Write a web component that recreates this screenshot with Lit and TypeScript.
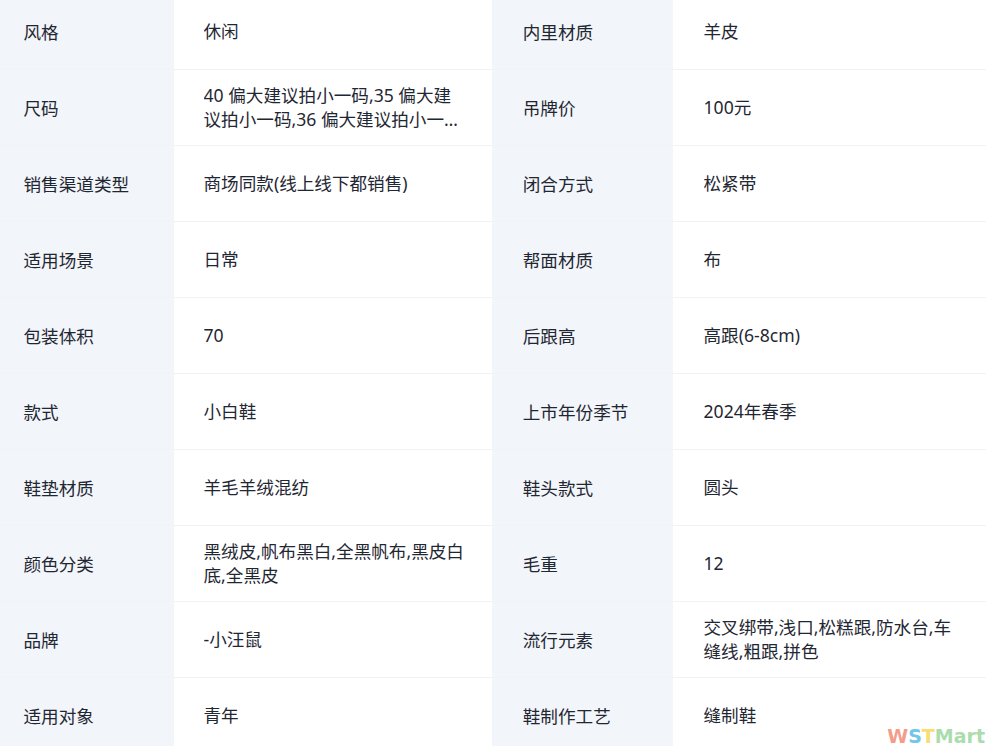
import { LitElement, html, css } from "lit";
import { customElement } from "lit/decorators.js";

const ROWS: [string, string, string, string][] = [
  ["风格", "休闲", "内里材质", "羊皮"],
  ["尺码", "40 偏大建议拍小一码,35 偏大建议拍小一码,36 偏大建议拍小一码,37 偏大建议拍小一码", "吊牌价", "100元"],
  ["销售渠道类型", "商场同款(线上线下都销售)", "闭合方式", "松紧带"],
  ["适用场景", "日常", "帮面材质", "布"],
  ["包装体积", "70", "后跟高", "高跟(6-8cm)"],
  ["款式", "小白鞋", "上市年份季节", "2024年春季"],
  ["鞋垫材质", "羊毛羊绒混纺", "鞋头款式", "圆头"],
  ["颜色分类", "黑绒皮,帆布黑白,全黑帆布,黑皮白底,全黑皮", "毛重", "12"],
  ["品牌", "-小汪鼠", "流行元素", "交叉绑带,浅口,松糕跟,防水台,车缝线,粗跟,拼色"],
  ["适用对象", "青年", "鞋制作工艺", "缝制鞋"],
];

@customElement("app-root")
export class AppRoot extends LitElement {
  static styles = css`
    :host {
      display: block;
      position: relative;
      width: 986px;
      height: 746px;
      overflow: hidden;
      background: #fff;
      font-family: "Noto Sans", "Noto Sans CJK SC", sans-serif;
      font-size: 17.6px;
      line-height: 24px;
      color: #1f2733;
    }
    .table {
      display: grid;
      grid-template-columns: 181px 318px 181px 318px;
      grid-auto-rows: 76px;
      width: 998px;
      margin: -6px 0 0 -7px;
    }
    .cell {
      display: flex;
      align-items: center;
      border-bottom: 1px solid #f0f2f5;
      box-sizing: border-box;
    }
    .label {
      background: #f2f5f9;
      padding: 0 20px 0 30.5px;
      border-bottom-color: #f0f3f7;
    }
    .label.right {
      padding-left: 30.75px;
    }
    .value {
      padding: 0 27px 2px 29.5px;
    }
    .value.right {
      padding-left: 30.5px;
    }
    .clamp {
      display: -webkit-box;
      -webkit-box-orient: vertical;
      -webkit-line-clamp: 2;
      overflow: hidden;
      word-break: break-all;
    }
    .mark {
      position: absolute;
      right: 1px;
      bottom: -2px;
      font-family: "DejaVu Sans", sans-serif;
      font-weight: 700;
      font-size: 19px;
      line-height: 24px;
      white-space: nowrap;
    }
    .w { color: #f39c88; }
    .s { color: #72c6ea; }
    .t { color: #f9dc74; }
    .m { color: #abdcae; }
  `;

  render() {
    return html`
      <div class="table">
        ${ROWS.map(
          ([a, b, c, d]) => html`
            <div class="cell label"><span>${a}</span></div>
            <div class="cell value"><span class="clamp">${b}</span></div>
            <div class="cell label right"><span>${c}</span></div>
            <div class="cell value right"><span class="clamp">${d}</span></div>
          `
        )}
      </div>
      <div class="mark"><span class="w">W</span><span class="s">S</span><span class="t">T</span><span class="m">Mart</span></div>
    `;
  }
}
